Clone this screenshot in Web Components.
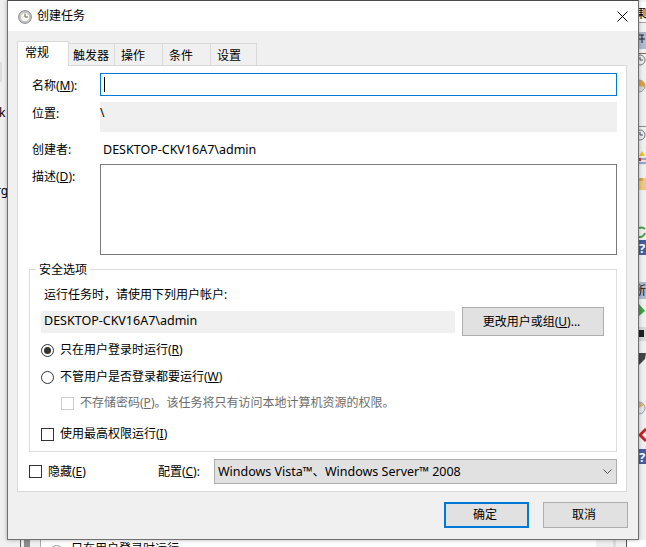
<!DOCTYPE html>
<html lang="zh-CN">
<head>
<meta charset="utf-8">
<title>创建任务</title>
<style>
  html, body { margin: 0; height: 547px; overflow: hidden; background: #fff; }
  body {
    position: relative;
    font: 12px/16px "Noto Sans", "Noto Sans CJK SC", sans-serif;
    color: #000;
  }
  form-row.name { margin-top: 7px; }
  form-row.where { margin-top: 6px; }
  form-row.creator { margin-top: 10px; }
  form-row.desc { margin-top: 6px; }
  task-group { margin-top: 14px; }
  .latin { font-size: 12.5px; }
  .account { display: flex; align-items: center; gap: 7px; margin-top: 4px; }
  .bottom-row { display: flex; align-items: center; margin-top: 7px; }
  .bottom-row .conf { margin-left: 72px; width: 56px; flex: none; }
  .indent { margin-left: 20px; }
</style>
</head>
<body>

<desktop-backdrop></desktop-backdrop>

<task-dialog heading="创建任务">
  <tab-strip slot="tabs">
    <tab-item active>常规</tab-item>
    <tab-item style="width:47px;padding-left:4px">触发器</tab-item>
    <tab-item style="width:49px">操作</tab-item>
    <tab-item style="width:49px">条件</tab-item>
    <tab-item style="width:47px">设置</tab-item>
  </tab-strip>

  <tab-panel slot="panel">
    <form-row class="name" center>
      <span slot="label" style="padding-top:2px">名称(<u>M</u>):</span>
      <text-box focused style="height:23px"></text-box>
    </form-row>
    <form-row class="where">
      <span slot="label" style="margin-top:4px">位置:</span>
      <read-field top style="height:30px">\</read-field>
    </form-row>
    <form-row class="creator" center>
      <span slot="label">创建者:</span>
      <span class="latin" style="padding-left:3px">DESKTOP-CKV16A7\admin</span>
    </form-row>
    <form-row class="desc">
      <span slot="label" style="margin-top:5px">描述(<u>D</u>):</span>
      <text-box style="height:91px"></text-box>
    </form-row>

    <task-group legend="安全选项">
      <div style="margin-left:3px">运行任务时，请使用下列用户帐户:</div>
      <div class="account">
        <read-field class="latin" style="width:414px;height:22px;padding:0 0 2px 3px">DESKTOP-CKV16A7\admin</read-field>
        <dlg-button style="width:142px;height:29px">更改用户或组(<u>U</u>)...</dlg-button>
      </div>
      <radio-option checked style="margin-top:6px">只在用户登录时运行(<u>R</u>)</radio-option>
      <radio-option style="margin-top:11px">不管用户是否登录都要运行(<u>W</u>)</radio-option>
      <check-option disabled class="indent" style="margin-top:10px">不存储密码(<u>P</u>)。该任务将只有访问本地计算机资源的权限。</check-option>
      <check-option style="margin-top:15px">使用最高权限运行(<u>I</u>)</check-option>
    </task-group>

    <div class="bottom-row">
      <check-option>隐藏(<u>E</u>)</check-option>
      <span class="conf">配置(<u>C</u>):</span>
      <drop-select class="latin" style="width:403px;height:25px">Windows Vista™、Windows Server™ 2008</drop-select>
    </div>
  </tab-panel>

  <dlg-button slot="actions" primary style="width:85px;height:26px">确定</dlg-button>
  <dlg-button slot="actions" style="width:85px;height:26px">取消</dlg-button>
</task-dialog>

<script>
function shadow(el, html) {
  el.attachShadow({ mode: 'open' });
  el.shadowRoot.innerHTML = html;
}

// what can be seen of the other windows around the dialog
class DesktopBackdrop extends HTMLElement {
  connectedCallback() {
    shadow(this, `
      <style>
        :host { display: block; position: absolute; inset: 0; overflow: hidden; background: #fff; }
        .left { position: absolute; left: 0; top: 0; width: 7px; height: 540px; background: #f0f0f0; overflow: hidden; }
        .block { position: absolute; left: 0; top: 62px; width: 2px; height: 20px; background: #dcdcdc; }
        .clip { position: absolute; font-size: 12px; line-height: 16px; white-space: nowrap; }
        .right { position: absolute; left: 639px; top: 0; width: 7px; height: 540px; }
        .bottom { position: absolute; left: 0; top: 540px; width: 646px; height: 7px; overflow: hidden; }
        .bottom i { position: absolute; top: 0; height: 7px; display: block; }
        .bottom .ghost { position: absolute; left: 71px; top: 1px; white-space: nowrap; line-height: 16px; }
        .bottom .dot { position: absolute; left: 50px; top: 5px; width: 11px; height: 11px; border: 1px solid #999; border-radius: 50%; }
      </style>
      <div class="left">
        <div class="block"></div>
        <span class="clip" style="left:-1px;top:105px">k</span>
        <span class="clip" style="left:-4px;top:183px">rg</span>
      </div>
      <svg class="right" width="7" height="540" viewBox="0 0 7 540">
        <rect width="7" height="540" fill="#f0f0f0"/>
        <rect y="2" width="7" height="20" fill="#fff"/>
        <text x="-4" y="18" font-size="12" fill="#000" font-family="Noto Sans CJK SC">果</text>
        <rect x="4" y="9" width="3" height="7" fill="#e08a3c"/>
        <rect y="22" width="7" height="1" fill="#a5a5a5"/>
        <rect y="32" width="7" height="17" fill="#a9bcd4"/>
        <path d="M0 35H5M3 35V43M0 39H6" stroke="#222" fill="none"/>
        <rect y="53" width="7" height="1" fill="#8a6a50"/>
        <circle cx="1" cy="60" r="5" fill="#eee" stroke="#777"/>
        <path d="M1 57V60H4" stroke="#555" fill="none"/>
        <circle cx="0" cy="86" r="6" fill="#d7d7d7" stroke="#9a9a9a"/>
        <path d="M0 80L5 82L6 87L0 86Z" fill="#e0a040"/>
        <rect y="126" width="7" height="1" fill="#8d8d8d"/>
        <circle cx="1" cy="135" r="5" fill="#e8eeee" stroke="#778"/>
        <path d="M1 132V135H4" stroke="#456" fill="none"/>
        <rect y="157" width="7" height="8" fill="#dfe6ef"/>
        <path d="M0 156L3 151L6 156Z" fill="#f0c020"/>
        <path d="M0 159H7M0 163H7" stroke="#4a6ea8"/>
        <rect y="158" width="2" height="3" fill="#c33"/>
        <rect y="178" width="7" height="12" fill="#efc878"/>
        <rect y="178" width="4" height="3" fill="#d9a548"/>
        <path d="M0 228A6 6 0 0 1 6 229M6 233A6 6 0 0 1 0 237" stroke="#3aa63a" stroke-width="2" fill="none"/>
        <rect y="240" width="7" height="15" fill="#3f5fa8"/>
        <text x="0" y="253" font-size="13" font-weight="700" fill="#fff" font-family="Noto Sans">?</text>
        <rect y="282" width="7" height="17" fill="#a9bcd4"/>
        <text x="-5" y="295" font-size="12" fill="#111" font-family="Noto Sans CJK SC">所</text>
        <path d="M0 304L6 311L0 316Z" fill="#3aa63a"/>
        <rect y="327" width="7" height="14" fill="#d8d8d8"/>
        <rect y="330" width="5" height="7" fill="#222"/>
        <path d="M0 353H7L6 359L0 365Z" fill="#444"/>
        <circle cx="0" cy="408" r="6" fill="#e6e6e6" stroke="#8a9bb0"/>
        <path d="M0 402L5 405L0 408Z" fill="#e0b060"/>
        <path d="M7 429L1 435L7 441" stroke="#cf2020" stroke-width="3" fill="none"/>
        <rect y="449" width="7" height="15" fill="#3f5fa8"/>
        <text x="0" y="462" font-size="13" font-weight="700" fill="#fff" font-family="Noto Sans">?</text>
      </svg>
      <div class="bottom">
        <i style="left:0;width:20px;background:#f0f0f0"></i>
        <i style="left:20px;width:1px;background:#666"></i>
        <i style="left:21px;width:3px;background:#f0f0f0"></i>
        <i style="left:24px;width:6px;background:#8c8c8c"></i>
        <i style="left:30px;width:10px;background:#f0f0f0"></i>
        <i style="left:40px;width:1px;background:#aaa"></i>
        <span class="dot"></span>
        <span class="ghost">只在用户登录时运行</span>
        <i style="left:596px;width:30px;background:#efefef"></i>
        <i style="left:613px;width:3px;background:#ddd"></i>
        <i style="left:626px;width:1px;background:#555"></i>
      </div>
    `);
  }
}

// a window on the desktop: title bar, tabs, tab page, button row
class TaskDialog extends HTMLElement {
  connectedCallback() {
    shadow(this, `
      <style>
        :host {
          display: flex; flex-direction: column;
          position: absolute; left: 7px; top: 0;
          width: 632px; height: 540px; box-sizing: border-box;
          border: 1px solid #707070; border-top-color: #4a4a4a;
          background: #f0f0f0;
          box-shadow: 0 0 4px rgba(0,0,0,.3);
        }
        .title { display: flex; align-items: center; height: 30px; background: #fff; flex: none; padding: 0 10px; }
        .title svg.clock { margin-right: 5px; flex: none; }
        .title span { flex: 1; }
        .body { flex: 1; display: flex; flex-direction: column; padding: 10px 11px 0 9px; }
        .actions { display: flex; justify-content: flex-end; gap: 14px; margin: 10px -1px 0 0; }
      </style>
      <div class="title">
        <svg class="clock" width="14" height="14" viewBox="0 0 14 14" style="margin-top:1px">
          <circle cx="7" cy="7" r="6.4" fill="#c9c9c9" stroke="#8c8c8c"/>
          <circle cx="7" cy="7" r="4.6" fill="#fbfbf6" stroke="#a8a8a8" stroke-width=".6"/>
          <path d="M7 3.6V7H10" stroke="#6a5a30" stroke-width="1" fill="none"/>
        </svg>
        <span>${this.getAttribute('heading')}</span>
        <svg width="11" height="11" viewBox="0 0 11 11">
          <path d="M.5 .5L10.5 10.5M10.5 .5L.5 10.5" stroke="#000" fill="none"/>
        </svg>
      </div>
      <div class="body">
        <slot name="tabs"></slot>
        <slot name="panel"></slot>
        <div class="actions"><slot name="actions"></slot></div>
      </div>
    `);
  }
}

class TabStrip extends HTMLElement {
  connectedCallback() {
    shadow(this, `
      <style>
        :host { display: flex; align-items: flex-end; height: 24px; position: relative; z-index: 1; }
      </style>
      <slot></slot>
    `);
  }
}

class TabItem extends HTMLElement {
  connectedCallback() {
    shadow(this, `
      <style>
        :host {
          display: block; box-sizing: border-box; height: 22px; margin-left: -1px;
          border: 1px solid #d9d9d9; border-bottom: 0;
          background: #f0f0f0; padding: 4px 0 0 6px; white-space: nowrap;
        }
        :host([active]) {
          width: 52px; height: 25px; margin: 0 0 -1px 0;
          background: #fff; padding: 3px 0 0 7px;
        }
      </style>
      <slot></slot>
    `);
  }
}

class TabPanel extends HTMLElement {
  connectedCallback() {
    shadow(this, `
      <style>
        :host {
          display: flex; flex-direction: column;
          box-sizing: border-box; width: 610px; height: 427px;
          background: #fff; border: 1px solid #d9d9d9;
          padding: 0 9px 0 11px;
        }
      </style>
      <slot></slot>
    `);
  }
}

class FormRow extends HTMLElement {
  connectedCallback() {
    shadow(this, `
      <style>
        :host { display: grid; grid-template-columns: 71px 1fr; }
        :host([center]) { align-items: center; }
        .label { padding-left: 3px; display: flex; }
      </style>
      <div class="label"><slot name="label"></slot></div>
      <slot></slot>
    `);
  }
}

class TextBox extends HTMLElement {
  connectedCallback() {
    shadow(this, `
      <style>
        :host { display: flex; align-items: center; box-sizing: border-box; border: 1px solid #7a7a7a; background: #fff; padding-left: 3px; }
        :host([focused]) { border-color: #0078d7; }
        .caret { width: 1px; height: 15px; background: #000; display: none; }
        :host([focused]) .caret { display: block; }
      </style>
      <span class="caret"></span><slot></slot>
    `);
  }
}

class ReadField extends HTMLElement {
  connectedCallback() {
    shadow(this, `
      <style>
        :host { display: flex; align-items: center; box-sizing: border-box; background: #f0f0f0; white-space: nowrap; }
        :host([top]) { align-items: flex-start; line-height: 22px; }
      </style>
      <slot></slot>
    `);
  }
}

class TaskGroup extends HTMLElement {
  connectedCallback() {
    shadow(this, `
      <style>
        :host {
          display: block; position: relative; box-sizing: border-box;
          height: 183px; border: 1px solid #dcdcdc; padding: 17px 0 0 11px;
        }
        .legend { position: absolute; left: 6px; top: -8px; background: #fff; padding: 0 3px; }
      </style>
      <div class="legend">${this.getAttribute('legend')}</div>
      <slot></slot>
    `);
  }
}

class RadioOption extends HTMLElement {
  connectedCallback() {
    shadow(this, `
      <style>
        :host { display: flex; align-items: center; height: 16px; white-space: nowrap; }
        .mark { width: 13px; height: 13px; box-sizing: border-box; border: 1px solid #333; border-radius: 50%; margin-right: 6px; display: flex; align-items: center; justify-content: center; flex: none; }
        .mark i { display: none; width: 7px; height: 7px; border-radius: 50%; background: #333; }
        :host([checked]) .mark i { display: block; }
      </style>
      <span class="mark"><i></i></span><span><slot></slot></span>
    `);
  }
}

class CheckOption extends HTMLElement {
  connectedCallback() {
    shadow(this, `
      <style>
        :host { display: flex; align-items: center; height: 16px; white-space: nowrap; }
        .box { width: 13px; height: 13px; box-sizing: border-box; border: 1px solid #333; margin-right: 6px; flex: none; }
        :host([disabled]) { color: #6d6d6d; }
        :host([disabled]) .box { border-color: #ccc; }
      </style>
      <span class="box"></span><span><slot></slot></span>
    `);
  }
}

class DlgButton extends HTMLElement {
  connectedCallback() {
    shadow(this, `
      <style>
        :host { display: flex; align-items: center; justify-content: center; box-sizing: border-box; background: #e1e1e1; border: 1px solid #adadad; padding-right: 3px; white-space: nowrap; flex: none; }
        :host([primary]) { border: 2px solid #0078d7; }
      </style>
      <slot></slot>
    `);
  }
}

class DropSelect extends HTMLElement {
  connectedCallback() {
    shadow(this, `
      <style>
        :host { display: flex; align-items: center; box-sizing: border-box; background: #e1e1e1; border: 1px solid #adadad; padding: 0 4px 0 3px; white-space: nowrap; }
        span { flex: 1; }
      </style>
      <span><slot></slot></span>
      <svg width="9" height="5" viewBox="0 0 9 5"><path d="M.5 .5L4.5 4.5L8.5 .5" stroke="#555" fill="none"/></svg>
    `);
  }
}

customElements.define('desktop-backdrop', DesktopBackdrop);
customElements.define('task-dialog', TaskDialog);
customElements.define('tab-strip', TabStrip);
customElements.define('tab-item', TabItem);
customElements.define('tab-panel', TabPanel);
customElements.define('form-row', FormRow);
customElements.define('text-box', TextBox);
customElements.define('read-field', ReadField);
customElements.define('task-group', TaskGroup);
customElements.define('radio-option', RadioOption);
customElements.define('check-option', CheckOption);
customElements.define('dlg-button', DlgButton);
customElements.define('drop-select', DropSelect);
</script>
</body>
</html>
